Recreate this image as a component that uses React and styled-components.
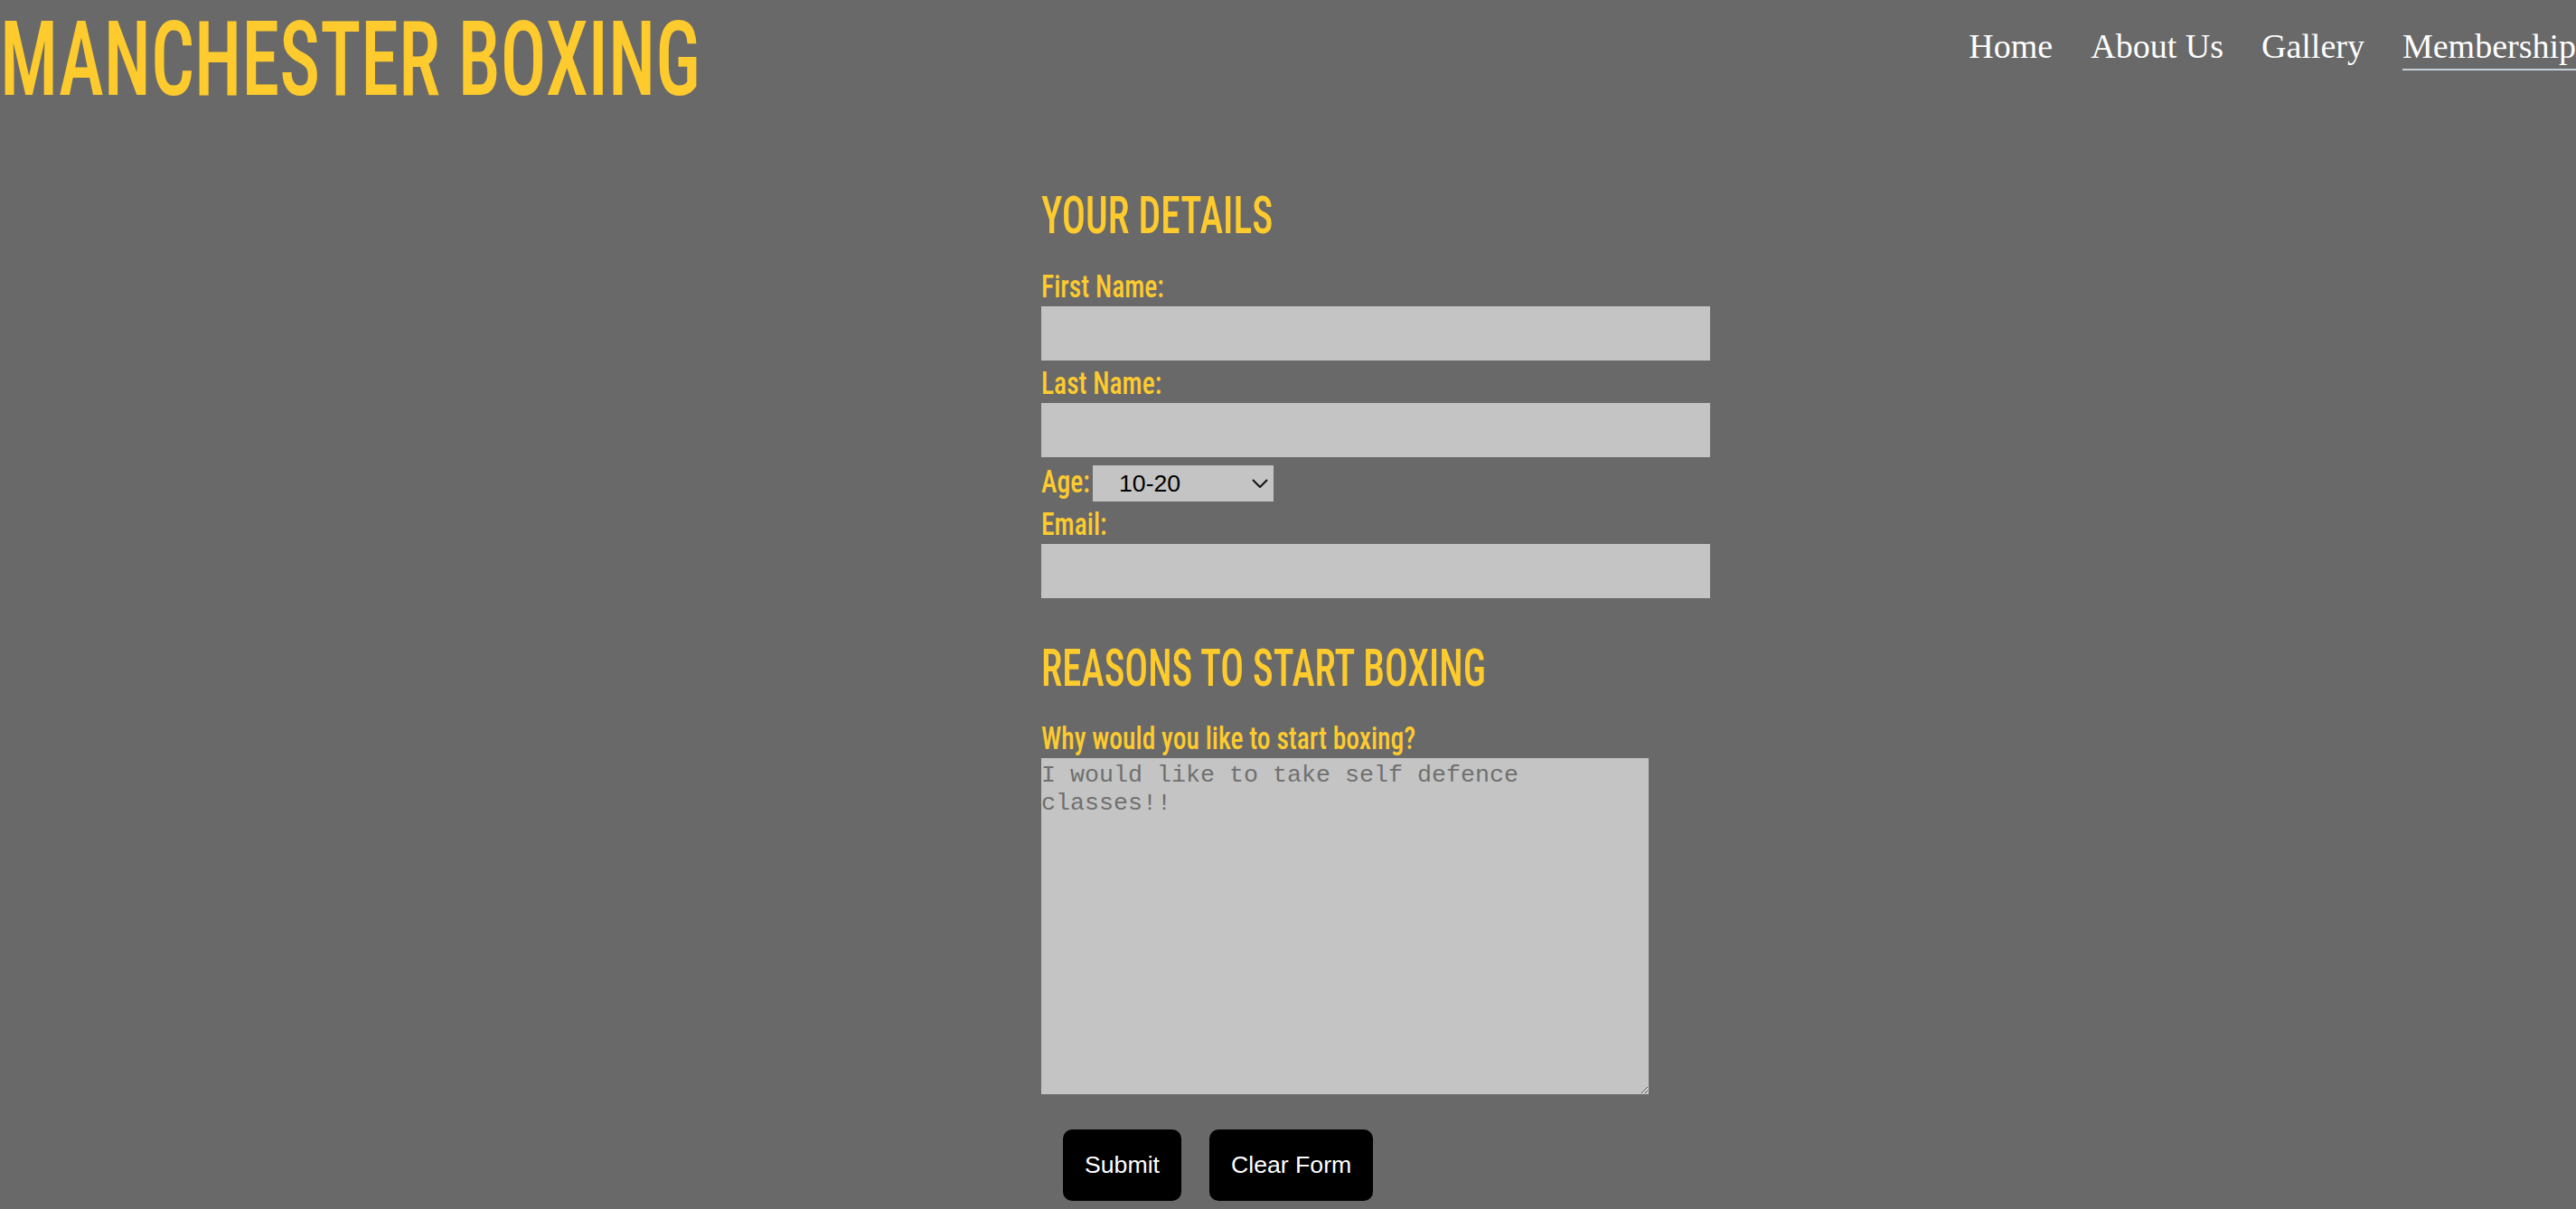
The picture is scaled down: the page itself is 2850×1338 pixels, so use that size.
import React from 'react'
import styled, { createGlobalStyle } from 'styled-components'

const GlobalStyle = createGlobalStyle`
  body {
    margin: 0;
    background: #696969;
    font-family: "Liberation Sans", Arial, sans-serif;
    overflow: hidden;
  }
`

// Oswald isnt installed, so Roboto at 75% width, squeezed a bit more
const Title = styled.h1`
  margin: 8px 0 0 0;
  font-family: Roboto, "Liberation Sans", sans-serif;
  font-stretch: 75%;
  font-weight: 500;
  font-size: 115px;
  line-height: 1;
  color: #fdcb2e;
  white-space: nowrap;
  transform: scaleX(0.737);
  transform-origin: left center;
`

const Header = styled.header`
  display: flex;
  justify-content: space-between;
  align-items: flex-start;
`

const Nav = styled.nav`
  display: flex;
  gap: 42px;
  margin-top: 31px;
`

const NavLink = styled.a`
  font-family: "Liberation Serif", "Times New Roman", serif;
  font-size: 38px;
  line-height: 40px;
  color: #fff;
  text-decoration: none;
  white-space: nowrap;
  padding-bottom: 5px;
  border-bottom: 2px solid ${p => (p.$active ? '#c3cfd9' : 'transparent')};
`

const Form = styled.form`
  margin-left: 1152px;
  width: 740px;
  display: flex;
  flex-direction: column;
  align-items: flex-start;
`

const SectionTitle = styled.h2`
  margin: ${p => p.$top}px 0 0 0;
  font-family: Roboto, "Liberation Sans", sans-serif;
  font-stretch: 75%;
  font-weight: 500;
  font-size: 57.7px;
  line-height: 1;
  color: #fdcb2e;
  white-space: nowrap;
  transform: scaleX(${p => p.$squeeze});
  transform-origin: left center;
`

const Label = styled.label`
  display: block;
  margin-top: ${p => p.$top || 0}px;
  font-family: Roboto, "Liberation Sans", sans-serif;
  font-stretch: 75%;
  font-weight: 500;
  font-size: 35px;
  line-height: 40px;
  height: 40px;
  color: #fdcb2e;
  white-space: nowrap;
  transform: scaleX(0.845);
  transform-origin: left center;
`

const TextInput = styled.input`
  margin-top: 1px;
  width: 740px;
  height: 60px;
  box-sizing: border-box;
  border: none;
  background: #c4c4c4;
  font-size: 26.67px;
  padding: 0 4px;
  outline: none;
`

const AgeRow = styled.div`
  margin-top: 9px;
  display: flex;
  align-items: flex-start;
`

const AgeLabel = styled(Label)`
  width: 57px;
  margin-top: -1px;
`

const SelectWrap = styled.div`
  position: relative;
  width: 200px;
  height: 40px;
`

const Select = styled.select`
  appearance: none;
  width: 200px;
  height: 40px;
  border: none;
  border-radius: 0;
  background: #c4c4c4;
  color: #000;
  font-family: "Liberation Sans", Arial, sans-serif;
  font-size: 26.67px;
  padding: 0 0 0 29px;
  outline: none;
`

const Chevron = styled.svg`
  position: absolute;
  right: 6px;
  top: 15px;
  width: 18px;
  height: 10px;
  pointer-events: none;
`

const TextArea = styled.textarea`
  margin-top: 1px;
  width: 672px;
  height: 372px;
  box-sizing: border-box;
  border: none;
  background: #c4c4c4;
  font-family: "Liberation Mono", "Courier New", monospace;
  font-size: 26.67px;
  line-height: 31px;
  padding: 4px 0 0 0;
  outline: none;
  &::placeholder {
    color: #707070;
  }
`

const Buttons = styled.div`
  display: flex;
  gap: 31px;
  margin: 39px 0 0 24px;
`

const Button = styled.button`
  background: #000;
  color: #fff;
  border: none;
  border-radius: 10px;
  font-family: "Liberation Sans", Arial, sans-serif;
  font-size: 26.67px;
  line-height: 31px;
  padding: 24px;
  cursor: pointer;
`

export default function App() {
  return (
    <>
      <GlobalStyle />
      <Header>
        <Title>MANCHESTER BOXING</Title>
        <Nav>
          <NavLink href="#">Home</NavLink>
          <NavLink href="#">About Us</NavLink>
          <NavLink href="#">Gallery</NavLink>
          <NavLink href="#" $active>Membership</NavLink>
        </Nav>
      </Header>

      <Form onSubmit={e => e.preventDefault()}>
        <SectionTitle $top={87} $squeeze={0.757}>YOUR DETAILS</SectionTitle>

        <Label $top={30} htmlFor="fname">First Name:</Label>
        <TextInput id="fname" type="text" />

        <Label $top={6} htmlFor="lname">Last Name:</Label>
        <TextInput id="lname" type="text" />

        <AgeRow>
          <AgeLabel htmlFor="age">Age:</AgeLabel>
          <SelectWrap>
            <Select id="age" defaultValue="10-20">
              <option>10-20</option>
              <option>21-30</option>
              <option>31-40</option>
              <option>41+</option>
            </Select>
            <Chevron viewBox="0 0 18 10">
              <path d="M1 1 L9 9 L17 1" fill="none" stroke="#111" strokeWidth="2" />
            </Chevron>
          </SelectWrap>
        </AgeRow>

        <Label $top={6} htmlFor="email">Email:</Label>
        <TextInput id="email" type="email" />

        <SectionTitle $top={49} $squeeze={0.743}>REASONS TO START BOXING</SectionTitle>

        <Label $top={30} htmlFor="why">Why would you like to start boxing?</Label>
        <TextArea id="why" placeholder="I would like to take self defence classes!!" />

        <Buttons>
          <Button type="submit">Submit</Button>
          <Button type="reset">Clear Form</Button>
        </Buttons>
      </Form>
    </>
  )
}
